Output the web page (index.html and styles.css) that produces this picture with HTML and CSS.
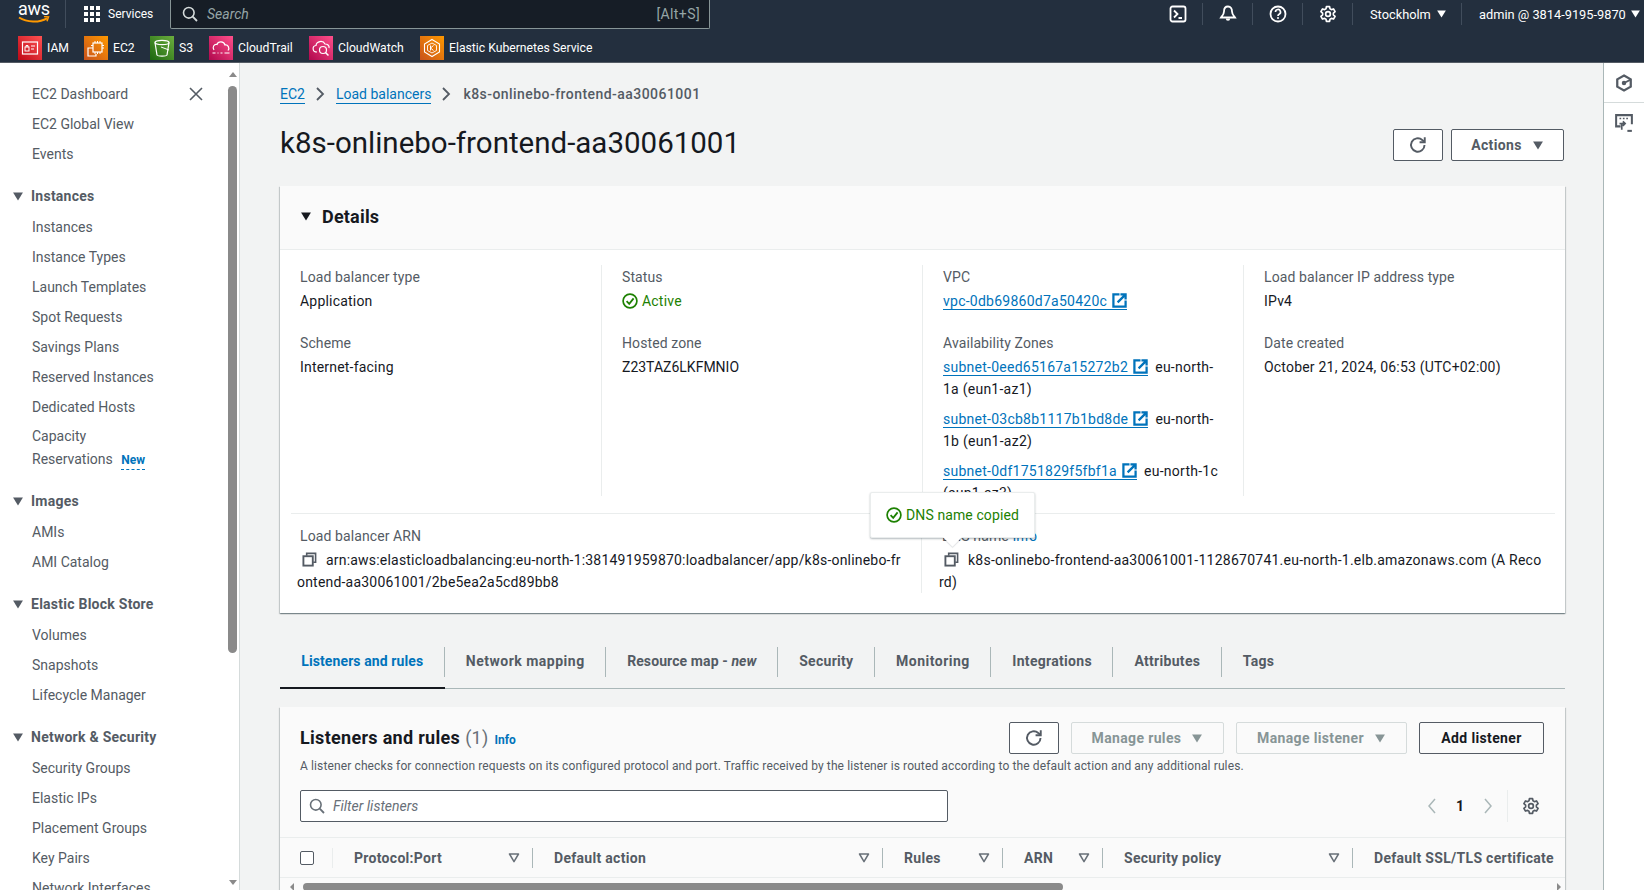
FILE: index.html
```html
<!DOCTYPE html>
<html lang="en">
<head>
<meta charset="utf-8">
<title>Load balancer details</title>
<link rel="stylesheet" href="styles.css">
</head>
<body>
<svg class="defs" aria-hidden="true">
  <symbol id="i-search" viewBox="0 0 16 16"><circle cx="6.8" cy="6.8" r="5.3" fill="none" stroke="currentColor" stroke-width="1.6"/><path d="M10.7 10.7 15 15" fill="none" stroke="currentColor" stroke-width="1.8"/></symbol>
  <symbol id="i-refresh" viewBox="0 0 16 16"><path d="M13.8 8a6 6 0 1 1-2-4.5L13.6 5" fill="none" stroke="currentColor" stroke-width="1.7"/><path d="M14 1v4.6H9.4" fill="none" stroke="currentColor" stroke-width="1.7"/></symbol>
  <symbol id="i-gear" viewBox="0 0 16 16"><path d="M6.6 1.5h2.8l.4 1.9 1.2.7 1.9-.6 1.4 2.4-1.5 1.3v1.6l1.5 1.3-1.4 2.4-1.9-.6-1.2.7-.4 1.9H6.6l-.4-1.9-1.2-.7-1.9.6-1.4-2.4 1.5-1.3V7.2L1.7 5.9l1.4-2.4 1.9.6 1.2-.7z" fill="none" stroke="currentColor" stroke-width="1.5" stroke-linejoin="round"/><circle cx="8" cy="8" r="2.1" fill="none" stroke="currentColor" stroke-width="1.5"/></symbol>
  <symbol id="i-copy" viewBox="0 0 16 16"><path d="M5 4V1.5h9.5V11H12" fill="none" stroke="currentColor" stroke-width="1.7"/><rect x="1.5" y="4.5" width="10" height="10" fill="none" stroke="currentColor" stroke-width="2"/></symbol>
  <symbol id="i-ext" viewBox="0 0 16 16"><path d="M8 1.5H1.5v13h13V8" fill="none" stroke="currentColor" stroke-width="2.4"/><path d="M6 10 14 2M9 1.5h5.5V7" fill="none" stroke="currentColor" stroke-width="2.4"/></symbol>
  <symbol id="i-check" viewBox="0 0 16 16"><circle cx="8" cy="8" r="6.9" fill="none" stroke="currentColor" stroke-width="1.7"/><path d="M4.6 8.2 7.2 10.8 11.6 5.4" fill="none" stroke="currentColor" stroke-width="1.8"/></symbol>
  <symbol id="i-caret" viewBox="0 0 12 10"><path d="M0.5 0.5h11L6 9.5z" fill="currentColor"/></symbol>
  <symbol id="i-sort" viewBox="0 0 12 10"><path d="M1.5 1h9L6 8.6z" fill="none" stroke="currentColor" stroke-width="1.5" stroke-linejoin="round"/></symbol>
</svg>

<header class="topnav">
  <div class="nav-row nav-main">
    <div class="logo"><span class="logo-word">aws</span>
      <svg class="logo-smile" viewBox="0 0 32 8"><path d="M1 1.5c8 5 20 5.5 28 .8" fill="none" stroke="#ff9900" stroke-width="2"/><path d="M26 .6l4.500.3-1.500 4.300" fill="none" stroke="#ff9900" stroke-width="1.500"/></svg>
    </div>
    <div class="services">
      <span class="grid-icon"><i></i><i></i><i></i><i></i><i></i><i></i><i></i><i></i><i></i></span>
      <span>Services</span>
    </div>
    <div class="searchbox">
      <svg class="ico16"><use href="#i-search"/></svg>
      <span class="search-text">Search</span>
      <span class="search-key">[Alt+S]</span>
    </div>
    <div class="nav-right">
      <div class="nav-cell nc-term"><svg class="ico18" viewBox="0 0 18 18"><rect x="1.500" y="1.500" width="15" height="15" rx="2" fill="none" stroke="currentColor" stroke-width="1.800"/><path d="M5 5.500 8.500 9 5 12.500M9.500 13H13" fill="none" stroke="currentColor" stroke-width="1.800"/></svg></div>
      <div class="nav-cell nc-icon"><svg class="ico18" viewBox="0 0 18 18"><path d="M9 1.500c-2.800 0-4 2.400-4 5 0 3-2.200 4.800-3 6h14c-.8-1.200-3-3-3-6 0-2.600-1.200-5-4-5z" fill="none" stroke="currentColor" stroke-width="1.800"/><path d="M6.800 13.500a2.200 2.200 0 0 0 4.400 0" fill="currentColor"/></svg></div>
      <div class="nav-cell nc-icon"><svg class="ico18" viewBox="0 0 18 18"><circle cx="9" cy="9" r="7.500" fill="none" stroke="currentColor" stroke-width="1.800"/><path d="M6.500 7a2.500 2.500 0 1 1 3.600 2.200C9.300 9.600 9 10 9 11" fill="none" stroke="currentColor" stroke-width="1.700"/><circle cx="9" cy="13" r="1" fill="currentColor"/></svg></div>
      <div class="nav-cell nc-icon"><svg class="ico18"><use href="#i-gear"/></svg></div>
      <div class="nav-cell nc-region"><span>Stockholm</span><svg class="caret"><use href="#i-caret"/></svg></div>
      <div class="nav-cell nc-user"><span>admin @ 3814-9195-9870</span><svg class="caret"><use href="#i-caret"/></svg></div>
    </div>
  </div>
  <div class="nav-row nav-fav">
    <div class="fav fav-iam"><span class="svc svc-red"><svg viewBox="0 0 24 24"><rect x="4.500" y="6" width="15" height="12" fill="none" stroke="#fff" stroke-width="1.200"/><rect x="7" y="11" width="4" height="4" fill="none" stroke="#fff"/><path d="M8 11V9.500h2V11M13 10h4M13 13h3" fill="none" stroke="#fff"/></svg></span>IAM</div>
    <div class="fav fav-ec2"><span class="svc svc-orange"><svg viewBox="0 0 24 24"><rect x="9" y="7" width="9" height="9" fill="none" stroke="#fff" stroke-width="1.200"/><path d="M11 5v2M13.500 5v2M16 5v2M11 16v2M13.500 16v2M16 16v2M7 9.500h2M7 12h2M18 9.500h2M18 12h2" stroke="#fff"/><path d="M7 12H4v8h8v-2" fill="none" stroke="#fff" stroke-width="1.200"/></svg></span>EC2</div>
    <div class="fav fav-s3"><span class="svc svc-green"><svg viewBox="0 0 24 24"><ellipse cx="12" cy="6.500" rx="7" ry="2.200" fill="none" stroke="#fff" stroke-width="1.200"/><path d="M5 6.500 7 19c1 1.500 9 1.500 10 0l2-12.500" fill="none" stroke="#fff" stroke-width="1.200"/><path d="M11 11l8 3" stroke="#fff"/></svg></span>S3</div>
    <div class="fav fav-ct"><span class="svc svc-pink"><svg viewBox="0 0 24 24"><path d="M5 14c-2-3 0-6 3-5.500C9 5 15 5 16 9c3-.5 5 3 3 5.500" fill="none" stroke="#fff" stroke-width="1.200"/><path d="M3.500 17h3M8.500 17h1M11.500 17h2M15.500 17h5" stroke="#fff" stroke-width="1.200"/></svg></span>CloudTrail</div>
    <div class="fav fav-cw"><span class="svc svc-pink"><svg viewBox="0 0 24 24"><path d="M8 16c-5 0-5-6-1-6.500C7.500 5 14 4 16 8c3 0 4.500 2 4 4" fill="none" stroke="#fff" stroke-width="1.200"/><circle cx="14" cy="14" r="3.500" fill="none" stroke="#fff" stroke-width="1.200"/><path d="m16.500 16.500 3 3" stroke="#fff" stroke-width="1.500"/></svg></span>CloudWatch</div>
    <div class="fav fav-eks"><span class="svc svc-orange"><svg viewBox="0 0 24 24"><path d="M12 3.500 19.500 8v8L12 20.500 4.500 16V8z" fill="none" stroke="#fff" stroke-width="1.100"/><path d="M12 7l4.500 2.500v5L12 17l-4.500-2.500v-5z" fill="none" stroke="#fff" stroke-width=".9"/><path d="M10.500 9.500v5M13.500 9.500l-3 2.500 3 2.500" fill="none" stroke="#fff"/></svg></span>Elastic Kubernetes Service</div>
  </div>
</header>

<div class="shell">
  <aside class="sidebar">
    <nav class="sidenav">
      <div class="side-first">
        <a class="side-item">EC2 Dashboard</a>
        <svg class="side-close" viewBox="0 0 16 16"><path d="M2 2l12 12M14 2 2 14" fill="none" stroke="currentColor" stroke-width="1.600"/></svg>
      </div>
      <a class="side-item">EC2 Global View</a>
      <a class="side-item">Events</a>

      <div class="side-head"><svg class="side-caret"><use href="#i-caret"/></svg>Instances</div>
      <a class="side-item">Instances</a>
      <a class="side-item">Instance Types</a>
      <a class="side-item">Launch Templates</a>
      <a class="side-item">Spot Requests</a>
      <a class="side-item">Savings Plans</a>
      <a class="side-item">Reserved Instances</a>
      <a class="side-item">Dedicated Hosts</a>
      <a class="side-item side-wrap">Capacity<br>Reservations <span class="new">New</span></a>

      <div class="side-head side-head-b"><svg class="side-caret"><use href="#i-caret"/></svg>Images</div>
      <a class="side-item">AMIs</a>
      <a class="side-item">AMI Catalog</a>

      <div class="side-head"><svg class="side-caret"><use href="#i-caret"/></svg>Elastic Block Store</div>
      <a class="side-item">Volumes</a>
      <a class="side-item">Snapshots</a>
      <a class="side-item">Lifecycle Manager</a>

      <div class="side-head"><svg class="side-caret"><use href="#i-caret"/></svg>Network &amp; Security</div>
      <a class="side-item">Security Groups</a>
      <a class="side-item">Elastic IPs</a>
      <a class="side-item">Placement Groups</a>
      <a class="side-item">Key Pairs</a>
      <a class="side-item">Network Interfaces</a>
    </nav>
    <div class="side-scroll">
      <span class="arrow-up"></span>
      <span class="side-thumb"></span>
      <span class="arrow-down"></span>
    </div>
  </aside>

  <main class="main">
    <div class="crumbs">
      <a class="link">EC2</a><svg class="chev" viewBox="0 0 10 16"><path d="m2 2 6 6-6 6" fill="none" stroke="currentColor" stroke-width="1.800"/></svg>
      <a class="link">Load balancers</a><svg class="chev" viewBox="0 0 10 16"><path d="m2 2 6 6-6 6" fill="none" stroke="currentColor" stroke-width="1.800"/></svg>
      <span class="crumb-cur">k8s-onlinebo-frontend-aa30061001</span>
    </div>

    <div class="title-row">
      <h1>k8s-onlinebo-frontend-aa30061001</h1>
      <div class="actions">
        <button class="btn btn-icon"><svg class="ico-btn"><use href="#i-refresh"/></svg></button>
        <button class="btn btn-actions">Actions<svg class="caret-btn"><use href="#i-caret"/></svg></button>
      </div>
    </div>

    <section class="card details">
      <div class="details-head"><svg class="head-caret"><use href="#i-caret"/></svg><h2>Details</h2></div>
      <div class="detail-cols">
        <div class="dcol">
          <div class="field"><div class="lbl">Load balancer type</div><div class="val">Application</div></div>
          <div class="field"><div class="lbl">Scheme</div><div class="val">Internet-facing</div></div>
        </div>
        <div class="dcol">
          <div class="field"><div class="lbl">Status</div><div class="val status"><svg class="ico16"><use href="#i-check"/></svg>Active</div></div>
          <div class="field"><div class="lbl">Hosted zone</div><div class="val val-tight">Z23TAZ6LKFMNIO</div></div>
        </div>
        <div class="dcol dcol-az">
          <div class="field"><div class="lbl">VPC</div><div class="val"><a class="link">vpc-0db69860d7a50420c <svg class="ico-ext"><use href="#i-ext"/></svg></a></div></div>
          <div class="field"><div class="lbl">Availability Zones</div>
            <div class="val az"><a class="link">subnet-0eed65167a15272b2 <svg class="ico-ext"><use href="#i-ext"/></svg></a> &nbsp;eu-north-1a (eun1-az1)</div>
            <div class="val az"><a class="link">subnet-03cb8b1117b1bd8de <svg class="ico-ext"><use href="#i-ext"/></svg></a> &nbsp;eu-north-1b (eun1-az2)</div>
            <div class="val az"><a class="link">subnet-0df1751829f5fbf1a <svg class="ico-ext"><use href="#i-ext"/></svg></a> &nbsp;eu-north-1c (eun1-az3)</div>
          </div>
        </div>
        <div class="dcol">
          <div class="field"><div class="lbl">Load balancer IP address type</div><div class="val">IPv4</div></div>
          <div class="field"><div class="lbl">Date created</div><div class="val">October 21, 2024, 06:53 (UTC+02:00)</div></div>
        </div>
      </div>
      <div class="detail-wide">
        <div class="wcol wcol-l">
          <div class="lbl wlbl">Load balancer ARN</div>
          <div class="wval"><svg class="ico-copy"><use href="#i-copy"/></svg>arn:aws:elasticloadbalancing:eu-north-1:381491959870:loadbalancer/app/k8s-onlinebo-frontend-aa30061001/2be5ea2a5cd89bb8</div>
        </div>
        <div class="wcol wcol-r">
          <div class="lbl wlbl">DNS name <a class="link-plain">Info</a></div>
          <div class="wval"><svg class="ico-copy"><use href="#i-copy"/></svg>k8s-onlinebo-frontend-aa30061001-1128670741.eu-north-1.elb.amazonaws.com (A Record)</div>
          <div class="tooltip"><svg class="ico16"><use href="#i-check"/></svg>DNS name copied</div>
        </div>
      </div>
    </section>

    <div class="tabs">
      <a class="tab tab-on">Listeners and rules</a>
      <a class="tab tab-wide">Network mapping</a>
      <a class="tab tab-slim">Resource map - <em>new</em></a>
      <a class="tab">Security</a>
      <a class="tab tab-wide">Monitoring</a>
      <a class="tab">Integrations</a>
      <a class="tab">Attributes</a>
      <a class="tab">Tags</a>
    </div>

    <section class="card listeners">
      <div class="lst-head">
        <div class="lst-title"><h2>Listeners and rules</h2><span class="count">(1)</span><a class="link-plain info">Info</a></div>
        <div class="lst-btns">
          <button class="btn btn-icon-b"><svg class="ico-btn"><use href="#i-refresh"/></svg></button>
          <button class="btn btn-off btn-rules">Manage rules<svg class="caret-btn"><use href="#i-caret"/></svg></button>
          <button class="btn btn-off btn-listener">Manage listener<svg class="caret-btn"><use href="#i-caret"/></svg></button>
          <button class="btn btn-add">Add listener</button>
        </div>
      </div>
      <p class="lst-desc">A listener checks for connection requests on its configured protocol and port. Traffic received by the listener is routed according to the default action and any additional rules.</p>
      <div class="lst-tools">
        <div class="filter"><svg class="ico16"><use href="#i-search"/></svg><span>Filter listeners</span></div>
        <div class="pager">
          <svg class="pg-chev" viewBox="0 0 10 16"><path d="M8 1 2 8l6 7" fill="none" stroke="currentColor" stroke-width="1.500"/></svg>
          <span class="pg-num">1</span>
          <svg class="pg-chev" viewBox="0 0 10 16"><path d="m2 1 6 7-6 7" fill="none" stroke="currentColor" stroke-width="1.500"/></svg>
          <span class="pg-gear"><svg class="ico-btn"><use href="#i-gear"/></svg></span>
        </div>
      </div>
      <div class="thead">
        <div class="th th-check"><span class="checkbox"></span></div>
        <div class="th th-proto"><span>Protocol:Port</span><svg class="sort"><use href="#i-sort"/></svg></div>
        <div class="th th-action"><span>Default action</span><svg class="sort"><use href="#i-sort"/></svg></div>
        <div class="th th-rules"><span>Rules</span><svg class="sort"><use href="#i-sort"/></svg></div>
        <div class="th th-arn"><span>ARN</span><svg class="sort"><use href="#i-sort"/></svg></div>
        <div class="th th-policy"><span>Security policy</span><svg class="sort"><use href="#i-sort"/></svg></div>
        <div class="th th-cert"><span>Default SSL/TLS certificate</span></div>
      </div>
      <div class="hscroll">
        <span class="arrow-left"></span>
        <span class="h-thumb"></span>
        <span class="arrow-right"></span>
      </div>
    </section>
  </main>

  <aside class="rail">
    <div class="rail-cell"><svg class="rail-ico" viewBox="0 0 16 16"><path d="M8 1.300 14 4.800v6.400L8 14.700l-6-3.500V4.800z" fill="none" stroke="currentColor" stroke-width="2"/><circle cx="8" cy="8" r="2" fill="currentColor"/><path d="M8 8l6-3" stroke="currentColor" stroke-width="1.500"/></svg></div>
    <div class="rail-cell rail-b"><svg class="rail-ico" viewBox="0 0 16 16"><path d="M5 11H1V1h14v8" fill="none" stroke="currentColor" stroke-width="1.800"/><path d="M4 4h1.500M7 4h1.500M10 4h1.500" stroke="currentColor" stroke-width="1.500"/><path d="M4 8.500h5M7 6.500l2 2-2 2M6 8.500V14" fill="none" stroke="currentColor" stroke-width="1.500"/><path d="M11 15h4" stroke="currentColor" stroke-width="1.800"/></svg></div>
  </aside>
</div>
</body>
</html>
```

FILE: styles.css
```css
* { box-sizing: border-box; }
html, body { margin: 0; height: 890px; overflow: hidden; }
body { font-family: Roboto, "Noto Sans", sans-serif; font-size: 14px; color: #16191f; background: #f2f3f3; display: flex; flex-direction: column; }
.defs { display: none; }
h1, h2, p { margin: 0; }
button { font: inherit; background: none; cursor: pointer; }
.ico16 { width: 16px; height: 16px; flex: none; }
.ico18 { width: 18px; height: 18px; display: block; }
.ico-btn { width: 18px; height: 18px; flex: none; }

.topnav { height: 63px; flex: none; background: #232f3e; border-bottom: 1px solid #545b64; color: #fff; }
.nav-row { display: flex; align-items: center; }
.nav-main { height: 28px; }
.nav-fav { height: 34px; padding: 5px 0 0 18px; font-size: 12.200px; }
.logo { width: 66px; height: 28px; padding: 1px 0 0 18px; border-right: 1px solid #414d5c; display: flex; flex-direction: column; align-items: flex-start; }
.logo-word { font-size: 18px; line-height: 15px; height: 15px; letter-spacing: -0.300px; }
.logo-smile { width: 32px; height: 8px; }
.services { width: 104px; display: flex; align-items: center; gap: 8px; padding-left: 18px; font-size: 12px; }
.grid-icon { display: grid; grid-template-columns: repeat(3, 4px); gap: 2px; }
.grid-icon i { width: 4px; height: 4px; background: #fff; }
.searchbox { width: 540px; height: 29px; background: #161d26; border: 1px solid #879596; border-top: 0; border-radius: 0 0 2px 2px; display: flex; align-items: center; padding: 0 9px 0 11px; color: #d5dbdb; }
.search-text { margin-left: 9px; font-style: italic; color: #95a5a6; font-size: 14px; }
.search-key { margin-left: auto; color: #95a5a6; font-size: 14px; letter-spacing: .4px; }
.nav-right { display: flex; margin-left: auto; height: 28px; align-items: center; font-size: 12.800px; }
.nav-cell { display: flex; align-items: center; height: 22px; border-right: 1px solid #414d5c; justify-content: center; }
.nc-term { width: 49px; }
.nc-icon { width: 50px; }
.nc-region { width: 109px; gap: 5px; padding-left: 17px; justify-content: flex-start; }
.nc-user { width: 182px; border-right: 0; gap: 4px; padding-left: 17px; justify-content: flex-start; }
.caret { width: 11px; height: 8px; flex: none; }
.fav { display: flex; align-items: center; gap: 5px; }
.fav-iam { width: 66px; }
.fav-ec2 { width: 66px; }
.fav-s3 { width: 59px; }
.fav-ct { width: 100px; }
.fav-cw { width: 111px; }
.svc { width: 24px; height: 24px; display: block; }
.svc svg { display: block; width: 24px; height: 24px; }
.svc-red { background: linear-gradient(45deg, #bd0816, #ff5252); }
.svc-orange { background: linear-gradient(45deg, #c8511b, #ff9900); }
.svc-green { background: linear-gradient(45deg, #1b660f, #6cae3e); }
.svc-pink { background: linear-gradient(45deg, #b0084d, #ff4f8b); }

.shell { flex: 1; display: flex; min-height: 0; }

.sidebar { width: 240px; flex: none; background: #fff; display: flex; border-right: 1px solid #d5dbdb; overflow: hidden; }
.sidenav { width: 228px; flex: none; padding-top: 16px; color: #545b64; }
.side-first { display: flex; align-items: center; justify-content: space-between; padding-right: 24px; }
.side-item { display: block; height: 30px; line-height: 30px; padding-left: 32px; white-space: nowrap; }
.side-wrap { height: auto; line-height: 23px; padding-top: 3px; }
.side-close { width: 16px; height: 16px; color: #545b64; }
.side-head { height: 31px; margin-top: 12px; padding-left: 12px; display: flex; align-items: center; gap: 7px; font-weight: 700; padding-bottom: 1px; letter-spacing: .25px; }
.side-head-b { margin-top: 14px; }
.side-caret { width: 12px; height: 9px; }
.new { font-size: 12px; font-weight: 700; color: #0073bb; border-bottom: 1px dashed #0073bb; margin-left: 5px; padding-bottom: 2px; }
.side-scroll { width: 9px; flex: none; display: flex; flex-direction: column; align-items: center; padding-top: 9px; }
.arrow-up { border: 4px solid transparent; border-top: 0; border-bottom: 5px solid #8a8a8a; width: 0; height: 0; }
.side-thumb { width: 9px; flex: none; height: 567px; border-radius: 5px; background: #8a8a8a; margin-top: 9px; }
.arrow-down { border: 4px solid transparent; border-bottom: 0; border-top: 5px solid #8a8a8a; width: 0; height: 0; margin-top: 227px; }

.main { width: 1363px; flex: none; padding-left: 40px; padding-right: 38px; overflow: hidden; }
.rail { width: 41px; flex: none; background: #fff; border-left: 1px solid #aab7b8; }
.rail-cell { height: 40px; display: flex; align-items: center; justify-content: center; color: #545b64; border-bottom: 1px solid #d5dbdb; }
.rail-b { border-bottom: 0; }
.rail-ico { width: 18px; height: 18px; }

.crumbs { display: flex; align-items: center; height: 24px; margin-top: 19px; }
.link { color: #0073bb; border-bottom: 1px solid #0073bb; line-height: 18px; letter-spacing: .25px; }
.crumbs .link { letter-spacing: 0; }
.link-plain { color: #0073bb; }
.chev { width: 10px; height: 16px; color: #545b64; margin: 0 11px 0 10px; }
.crumb-cur { color: #545b64; font-weight: 500; letter-spacing: .45px; margin-left: 1px; }

.title-row { display: flex; align-items: center; justify-content: space-between; height: 56px; margin-top: 7px; }
h1 { font-size: 29.500px; font-weight: 400; margin-top: 3px; }
.actions { display: flex; gap: 8px; margin-top: 8px; margin-right: 1px; }
.btn { height: 32px; border: 1px solid #545b64; border-radius: 2px; background: #fff; color: #545b64; font-weight: 700; display: flex; align-items: center; justify-content: center; gap: 10px; letter-spacing: .35px; }
.btn-icon { width: 50px; }
.btn-actions { width: 113px; }
.caret-btn { width: 12px; height: 9px; }

.card { background: #fff; box-shadow: 0 1px 1px 0 rgba(0,28,36,.3), 1px 1px 1px 0 rgba(0,28,36,.15), -1px 1px 1px 0 rgba(0,28,36,.15); }
.details { height: 427px; margin-top: 17px; }
.details-head { height: 64px; background: #fafafa; border-bottom: 1px solid #eaeded; display: flex; align-items: center; padding: 0 0 2px 20px; gap: 10px; }
.details-head h2 { font-size: 18px; font-weight: 700; letter-spacing: .2px; }
.head-caret { width: 12px; height: 9px; color: #16191f; }
.detail-cols { display: grid; grid-template-columns: 311px 321px 321px 1fr; margin: 0 10px 0 11px; height: 264px; padding-top: 15px; border-bottom: 1px solid #eaeded; overflow: hidden; }
.dcol { height: 231px; padding-left: 20px; padding-right: 14px; border-right: 1px solid #eaeded; }
.dcol:first-child { padding-left: 9px; }
.dcol:last-child { border-right: 0; }
.dcol-az { padding-right: 20px; }
.field { line-height: 22px; margin-bottom: 19px; }
.lbl { color: #545b64; line-height: 25px; letter-spacing: .1px; }
.val { line-height: 22px; letter-spacing: .2px; }
.val-tight { letter-spacing: 0; }
.status { color: #1d8102; display: flex; align-items: center; gap: 4px; }
.az { margin-bottom: 8px; letter-spacing: .25px; }
.ico-ext { width: 15px; height: 15px; vertical-align: -2px; margin-left: 1px; color: #0073bb; }
.detail-wide { display: grid; grid-template-columns: 631px 1fr; margin: 0 10px 0 11px; }
.wcol { height: 79px; padding-top: 10px; position: relative; }
.wcol-l { border-right: 1px solid #eaeded; padding-left: 6px; padding-right: 18px; }
.wcol-r { padding-left: 17px; padding-right: 13px; }
.wlbl { padding-left: 3px; line-height: 25px; }
.wval { word-break: break-all; line-height: 22px; letter-spacing: .25px; }
.wcol-l .wval { letter-spacing: .2px; }
.ico-copy { width: 15px; height: 15px; vertical-align: -2px; margin: 0 9px 0 5px; color: #545b64; }
.tooltip { position: absolute; left: -52px; top: -22px; width: 165px; height: 46px; background: #fff; color: #1d8102; border: 1px solid #eaeded; border-radius: 2px; box-shadow: 0 1px 2px rgba(0,28,36,.3); display: flex; align-items: center; justify-content: center; gap: 4px; letter-spacing: .1px; }
.tooltip::after { content: ""; position: absolute; left: 75px; bottom: -7px; width: 13px; height: 13px; background: #fff; transform: rotate(45deg); box-shadow: 1px 1px 1px rgba(0,28,36,.12); }

.tabs { display: flex; margin-top: 28px; height: 48px; border-bottom: 1px solid #aab7b8; align-items: flex-start; }
.tab { height: 48px; padding: 0 21.250px 8px; display: flex; align-items: center; font-weight: 700; color: #545b64; position: relative; letter-spacing: .3px; white-space: pre; }
.tab::after { content: ""; position: absolute; right: 0; top: 6px; height: 30px; width: 1px; background: #aab7b8; }
.tab:last-child::after { display: none; }
.tab em { font-style: italic; }
.tab-wide { letter-spacing: .5px; }
.tab-slim { letter-spacing: .1px; }
.tab-on { color: #0073bb; border-bottom: 2px solid #16191f; letter-spacing: .1px; padding-bottom: 6px; }

.listeners { margin-top: 18px; background: #fafafa; height: 200px; }
.lst-head { display: flex; justify-content: space-between; align-items: flex-start; padding: 15px 21px 0 20px; height: 47px; }
.lst-title { display: flex; align-items: baseline; gap: 5px; padding-top: 5px; }
.lst-title h2 { font-size: 18px; font-weight: 700; letter-spacing: .3px; }
.count { font-size: 18px; color: #687078; letter-spacing: .3px; }
.info { font-size: 12px; font-weight: 700; margin-left: 1px; }
.lst-btns { display: flex; gap: 12px; }
.btn-icon-b { width: 50px; }
.btn-off { background: transparent; border-color: #d5dbdb; color: #879596; }
.btn-rules { width: 153px; }
.btn-listener { width: 171px; }
.btn-add { width: 125px; color: #16191f; border-color: #545b64; background: transparent; }
.lst-desc { font-size: 12px; color: #545b64; padding: 4px 0 0 20px; line-height: 16px; height: 36px; letter-spacing: .12px; }
.lst-tools { display: flex; align-items: flex-start; justify-content: space-between; padding: 0 25px 0 20px; height: 48px; border-bottom: 1px solid #eaeded; }
.filter { width: 648px; height: 32px; background: #fff; border: 1px solid #545b64; border-radius: 2px; display: flex; align-items: center; gap: 8px; padding-left: 8px; color: #687078; }
.filter span { font-style: italic; }
.pager { display: flex; align-items: center; color: #aab7b8; height: 32px; }
.pg-chev { width: 10px; height: 16px; }
.pg-num { width: 46px; text-align: center; color: #16191f; font-weight: 700; }
.pg-gear { margin-left: 14px; border-left: 1px solid #eaeded; height: 32px; padding-left: 14px; display: flex; align-items: center; color: #545b64; }
.thead { display: grid; grid-template-columns: 53px 200px 350px 120px 100px 250px 1fr; height: 40px; background: #fafafa; border-bottom: 1px solid #eaeded; align-items: center; overflow: hidden; }
.th { height: 20px; display: flex; align-items: center; justify-content: space-between; padding: 0 12px 0 21px; font-weight: 700; color: #545b64; border-right: 1px solid #aab7b8; white-space: nowrap; letter-spacing: .3px; }
.th-check { padding-left: 20px; padding-right: 0; border-right-color: #eaeded; }
.th-cert { border-right: 0; padding-right: 0; }
.checkbox { width: 14px; height: 14px; border: 1px solid #545b64; border-radius: 2px; background: #fff; }
.sort { width: 12px; height: 10px; color: #687078; }
.hscroll { display: flex; align-items: flex-start; height: 20px; padding: 5px 4px 0 10px; gap: 9px; }
.h-thumb { width: 760px; height: 8px; border-radius: 4px; background: #8a8a8a; }
.arrow-left { border: 4px solid transparent; border-left: 0; border-right: 4px solid #8a8a8a; }
.arrow-right { border: 4px solid transparent; border-right: 0; border-left: 4px solid #8a8a8a; margin-left: auto; }
```
